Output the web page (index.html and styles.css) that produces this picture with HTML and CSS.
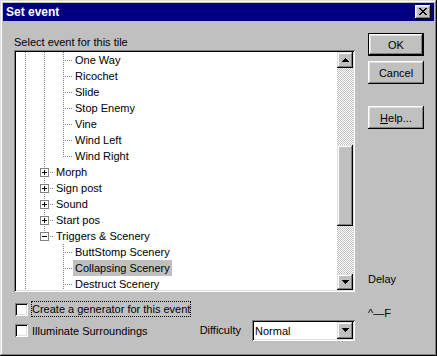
FILE: index.html
```html
<!DOCTYPE html>
<html lang="en">
<head>
  <meta charset="UTF-8" />
  <meta name="viewport" content="width=device-width, initial-scale=1.0" />
  <title>Set event</title>
  <link rel="stylesheet" href="styles.css">
</head>
<body>
  <div class="window">
    <div class="titlebar">
      <span>Set event</span>
      <button class="close">
        <svg width="8" height="7" viewBox="0 0 8 7" shape-rendering="crispEdges"><path d="M0 0h2v1h1v1h2V1h1V0h2v1H7v1H6v1H5v1h1v1h1v1h1v1H6V6H5V5H3v1H2v1H0V6h1V5h1V4h1V3H2V2H1V1H0z"/></svg>
      </button>
    </div>
    <div class="main">
      <div class="left">
        <div class="caption">Select event for this tile</div>
        <div class="tree">
          <div class="items">
            <div class="row"><i class="g v"></i><i class="g v"></i><i class="g t"></i><span class="txt">One Way</span></div>
            <div class="row"><i class="g v"></i><i class="g v"></i><i class="g t"></i><span class="txt">Ricochet</span></div>
            <div class="row"><i class="g v"></i><i class="g v"></i><i class="g t"></i><span class="txt">Slide</span></div>
            <div class="row"><i class="g v"></i><i class="g v"></i><i class="g t"></i><span class="txt">Stop Enemy</span></div>
            <div class="row"><i class="g v"></i><i class="g v"></i><i class="g t"></i><span class="txt">Vine</span></div>
            <div class="row"><i class="g v"></i><i class="g v"></i><i class="g t"></i><span class="txt">Wind Left</span></div>
            <div class="row"><i class="g v"></i><i class="g v"></i><i class="g l"></i><span class="txt">Wind Right</span></div>
            <div class="row"><i class="g v"></i><i class="g x"><b class="box plus"></b></i><span class="txt">Morph</span></div>
            <div class="row"><i class="g v"></i><i class="g x"><b class="box plus"></b></i><span class="txt">Sign post</span></div>
            <div class="row"><i class="g v"></i><i class="g x"><b class="box plus"></b></i><span class="txt">Sound</span></div>
            <div class="row"><i class="g v"></i><i class="g x"><b class="box plus"></b></i><span class="txt">Start pos</span></div>
            <div class="row"><i class="g v"></i><i class="g x last"><b class="box"></b></i><span class="txt">Triggers &amp; Scenery</span></div>
            <div class="row"><i class="g v"></i><i class="g"></i><i class="g t"></i><span class="txt">ButtStomp Scenery</span></div>
            <div class="row"><i class="g v"></i><i class="g"></i><i class="g t"></i><span class="txt selected">Collapsing Scenery</span></div>
            <div class="row"><i class="g v"></i><i class="g"></i><i class="g t"></i><span class="txt">Destruct Scenery</span></div>
          </div>
          <div class="scrollbar">
            <div class="sb-btn">
              <svg width="7" height="4" viewBox="0 0 7 4" shape-rendering="crispEdges"><path d="M3 0h1v1h1v1h1v1h1v1H0V3h1V2h1V1h1z"/></svg>
            </div>
            <div class="track"><div class="thumb"></div></div>
            <div class="sb-btn">
              <svg width="7" height="4" viewBox="0 0 7 4" shape-rendering="crispEdges"><path d="M0 0h7v1H6v1H5v1H4v1H3V3H2V2H1V1H0z"/></svg>
            </div>
          </div>
        </div>
        <div class="check-row">
          <span class="check"></span>
          <span class="lbl focus">Create a generator for this event</span>
        </div>
        <div class="check-row second">
          <span class="check"></span>
          <span class="lbl">Illuminate Surroundings</span>
          <span class="diff">Difficulty</span>
          <div class="combo">
            <span class="value">Normal</span>
            <div class="sb-btn">
              <svg width="7" height="4" viewBox="0 0 7 4" shape-rendering="crispEdges"><path d="M0 0h7v1H6v1H5v1H4v1H3V3H2V2H1V1H0z"/></svg>
            </div>
          </div>
        </div>
      </div>
      <div class="right">
        <button class="btn default">OK</button>
        <button class="btn">Cancel</button>
        <button class="btn help"><u>H</u>elp...</button>
        <div class="note delay">Delay</div>
        <div class="note keys">^—F</div>
      </div>
    </div>
  </div>
</body>
</html>
```

FILE: styles.css
```css
* { box-sizing: border-box; margin: 0; padding: 0; }
body {
  font-family: "Liberation Sans", Arial, sans-serif;
  font-size: 11px;
  color: #000;
  background: #c0c0c0;
  overflow: hidden;
}
.window {
  width: 437px;
  height: 356px;
  padding: 3px;
  background: #c0c0c0;
  box-shadow: inset -1px -1px #000, inset 1px 1px #dfdfdf, inset -2px -2px #808080, inset 2px 2px #fff;
  display: flex;
  flex-direction: column;
}
.titlebar {
  height: 18px;
  background: #000080;
  color: #fff;
  font-weight: bold;
  font-size: 12px;
  line-height: 18px;
  display: flex;
  align-items: center;
  justify-content: space-between;
  padding: 0 3px 0 3px;
}
.close {
  width: 16px;
  height: 14px;
  background: #c0c0c0;
  border: none;
  display: flex;
  align-items: center;
  justify-content: center;
  padding: 0 1px 1px 0;
  box-shadow: inset -1px -1px #000, inset 1px 1px #fff, inset -2px -2px #808080, inset 2px 2px #dfdfdf;
}
.close svg, .sb-btn svg { display: block; fill: #000; }
.main {
  display: flex;
  padding: 12px 0 0 11px;
}
.left {
  width: 341px;
  display: flex;
  flex-direction: column;
}
.caption {
  margin-top: 3px;
  line-height: 13px;
  margin-bottom: 1px;
}
.tree {
  height: 242px;
  padding: 2px;
  background: #fff;
  box-shadow: inset 1px 1px #808080, inset -1px -1px #fff, inset 2px 2px #000, inset -2px -2px #dfdfdf;
  display: flex;
}
.items {
  flex: 1;
  overflow: hidden;
}
.row {
  display: flex;
  height: 16px;
}
.g {
  display: block;
  width: 19px;
  height: 16px;
  flex: none;
  background-repeat: no-repeat;
}
.g.v, .g.t, .g.l, .g.x {
  background-image: repeating-linear-gradient(#808080 0 1px, transparent 1px 2px);
  background-position: 9px 0;
  background-size: 1px 16px;
}
.g.t, .g.l, .g.x {
  background-image: repeating-linear-gradient(#808080 0 1px, transparent 1px 2px),
    repeating-linear-gradient(to right, #808080 0 1px, transparent 1px 2px);
  background-position: 9px 0, 11px 8px;
  background-size: 1px 16px, 8px 1px;
}
.g.l, .g.x.last { background-size: 1px 9px, 8px 1px; }
.g.x { background-position: 9px 0, 15px 8px; background-size: 1px 16px, 4px 1px; }
.g.x.last { background-size: 1px 9px, 4px 1px; }
.box {
  display: block;
  width: 9px;
  height: 9px;
  margin: 4px 0 0 5px;
  border: 1px solid #808080;
  background: linear-gradient(#000, #000) center / 5px 1px no-repeat, #fff;
}
.box.plus {
  background: linear-gradient(#000, #000) center / 5px 1px no-repeat,
    linear-gradient(#000, #000) center / 1px 5px no-repeat, #fff;
}
.txt {
  padding: 1px 2px 0;
  line-height: 15px;
  white-space: nowrap;
}
.txt.selected { background: #c0c0c0; }
.scrollbar {
  width: 16px;
  flex: none;
  display: flex;
  flex-direction: column;
  background: repeating-conic-gradient(#c0c0c0 0 25%, #fff 0 50%) 0 0 / 2px 2px;
}
.sb-btn {
  width: 16px;
  height: 16px;
  flex: none;
  background: #c0c0c0;
  display: flex;
  align-items: center;
  justify-content: center;
  padding-bottom: 1px;
  box-shadow: inset -1px -1px #000, inset 1px 1px #dfdfdf, inset -2px -2px #808080, inset 2px 2px #fff;
}
.track { flex: 1; }
.thumb {
  margin-top: 77px;
  height: 81px;
  background: #c0c0c0;
  box-shadow: inset -1px -1px #000, inset 1px 1px #dfdfdf, inset -2px -2px #808080, inset 2px 2px #fff;
}
.check-row {
  display: flex;
  align-items: center;
  height: 16px;
  margin-top: 9px;
}
.check-row.second {
  height: 21px;
  margin-top: 3px;
}
.check {
  width: 13px;
  height: 13px;
  margin-left: 1px;
  background: #fff;
  box-shadow: inset 1px 1px #808080, inset -1px -1px #fff, inset 2px 2px #000, inset -2px -2px #dfdfdf;
}
.lbl {
  margin-left: 3px;
  border: 1px solid transparent;
  line-height: 14px;
  white-space: nowrap;
}
.lbl.focus { border: 1px dotted #000; }
.diff { margin-left: auto; line-height: 13px; }
.combo {
  width: 103px;
  height: 21px;
  margin-left: 11px;
  padding: 2px;
  background: #fff;
  box-shadow: inset 1px 1px #808080, inset -1px -1px #fff, inset 2px 2px #000, inset -2px -2px #dfdfdf;
  display: flex;
}
.combo .value { flex: 1; padding: 1px 0 0 1px; line-height: 16px; }
.combo .sb-btn { height: 17px; }
.right {
  width: 56px;
  margin-left: 13px;
  display: flex;
  flex-direction: column;
}
.btn {
  width: 56px;
  height: 23px;
  font: inherit;
  color: #000;
  background: #c0c0c0;
  border: none;
  margin-bottom: 5px;
  box-shadow: inset -1px -1px #000, inset 1px 1px #fff, inset -2px -2px #808080, inset 2px 2px #dfdfdf;
}
.btn.default {
  border: 1px solid #000;
}
.btn.help { margin-top: 17px; }
.note { line-height: 13px; white-space: nowrap; }
.delay { margin-top: 139px; }
.keys { margin-top: 21px; }
```
